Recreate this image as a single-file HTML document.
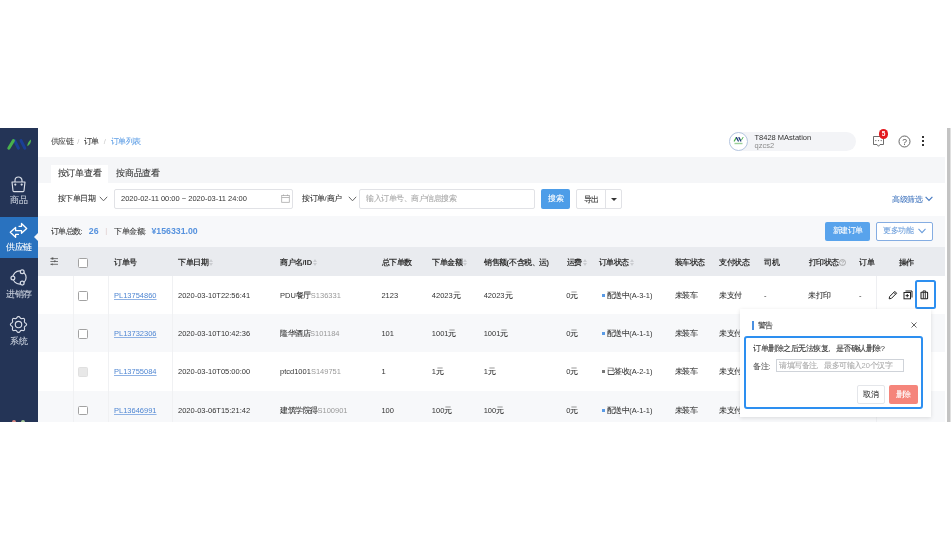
<!DOCTYPE html>
<html><head><meta charset="utf-8">
<style>
*{box-sizing:border-box;margin:0;padding:0}
html,body{width:951px;height:550px;background:#fff;overflow:hidden;font-family:"Liberation Sans",sans-serif;color:#333;font-size:7.5px}
.a{position:absolute;white-space:nowrap}
.c{letter-spacing:-0.5px;-webkit-text-stroke:0.08px currentColor}
.big .c{letter-spacing:-0.25px}
.th .c{-webkit-text-stroke:0}
#app{position:absolute;left:0;top:128px;width:951px;height:294px;overflow:hidden;background:#f0f2f5;will-change:transform}
#side{position:absolute;left:0;top:0;width:38px;height:294px;background:#243456}
.mi{position:absolute;left:0;width:38px;text-align:center;color:#c9d0dd;font-size:8.75px;line-height:10px}
#main{position:absolute;left:38px;top:0;width:909px;height:294px;background:#fff}
#tabbar{position:absolute;left:0;top:29px;width:907px;height:26px;background:#f5f6f8}
#hdr{position:absolute;left:0;top:0;width:909px;height:29px;background:#fff}
#scroll{position:absolute;left:947px;top:0;width:4px;height:294px;background:linear-gradient(90deg,#c3c3c3 0,#c3c3c3 3px,#e0e0e0 3px)}
.tab{position:absolute;top:37px;height:18px;line-height:16px;font-size:8.75px;color:#333;text-align:center}
#filter{position:absolute;left:0;top:55px;width:907px;height:32.5px;background:#fff}
#summary{position:absolute;left:0;top:87.5px;width:907px;height:31.5px;background:#f7f8fa}
#thead{position:absolute;left:0;top:119px;width:906.5px;height:29px;background:#e9ebef}
.row{position:absolute;left:0;width:907px;height:38.3px;background:#fff}
.row.s{background:#f7f8fa}
.th{position:absolute;top:1px;line-height:29px;font-weight:bold;color:#333}
.so{display:inline-block;vertical-align:top;margin-left:1.2px;margin-top:10.8px;width:4px;height:7px;position:relative}
.so:before,.so:after{content:'';position:absolute;left:0;border-left:2px solid transparent;border-right:2px solid transparent}
.so:before{top:0;border-bottom:3.3px solid #cbcdd1}
.so:after{bottom:0;border-top:3.3px solid #cbcdd1}
.td{position:absolute;line-height:38px;top:1px;color:#333}
.cb{position:absolute;width:9.5px;height:9.5px;border:1px solid #a2a2a2;border-radius:1.5px;background:#fff}
.lk{color:#4f86d2;text-decoration:underline;text-decoration-color:#8fb2e4;text-decoration-thickness:0.6px;text-underline-offset:1.2px}
.g{color:#999}
.inp{position:absolute;border:1px solid #e1e2e6;border-radius:2px;background:#fff}
.btn{position:absolute;border-radius:2px;text-align:center}
</style></head><body>
<div id="app">

  <div id="side">
    <svg class="a" style="left:0;top:0" width="38" height="29" viewBox="0 0 38 29">
      <line x1="14.6" y1="12.6" x2="18.4" y2="20.2" stroke="#1a3f96" stroke-width="3" stroke-linecap="round"/>
      <line x1="21" y1="12.6" x2="24.8" y2="20.2" stroke="#1a3f96" stroke-width="3" stroke-linecap="round"/>
      <line x1="8.8" y1="20.2" x2="13.4" y2="12.6" stroke="#48b04c" stroke-width="3" stroke-linecap="round"/>
      <path d="M27.3 18.2 C27.2 15.5 28.8 12.8 31 11.4 C31.3 14.2 29.8 16.9 27.3 18.2 Z" fill="#52b552"/>
    </svg>
    <svg class="a" style="left:10px;top:47.5px" width="17" height="17" viewBox="0 0 17 17">
      <path d="M2 6 H15 L14 14.8 Q13.9 15.6 13.1 15.6 H3.9 Q3.1 15.6 3 14.8 Z" fill="none" stroke="#d9dee8" stroke-width="1.15" stroke-linejoin="round"/>
      <path d="M5 6 V4.5 A3.5 3.5 0 0 1 12 4.5 V6" fill="none" stroke="#d9dee8" stroke-width="1.15"/>
      <circle cx="5.3" cy="8.6" r="1.1" fill="#d9dee8"/><circle cx="11.7" cy="8.6" r="1.1" fill="#d9dee8"/>
    </svg>
    <div class="mi big" style="top:66.5px"><span class="c">商品</span></div>
    <div class="a" style="left:0;top:88.5px;width:38px;height:41px;background:#2972bf"></div>
    <svg class="a" style="left:0;top:88px" width="38" height="30" viewBox="0 0 38 30">
      <path d="M19 10.3 H21.5 V7.5 L26.7 12.5 L21.5 17.3 V14.7 H15.6 V11.4 L10.3 16.2 L15.6 21.2 V18.4 H18.4" fill="none" stroke="#fff" stroke-width="1.3" stroke-linejoin="round" stroke-linecap="round"/>
    </svg>
    <div class="mi big" style="top:113.5px;color:#fff"><span class="c">供应链</span></div>
    <div class="a" style="left:34px;top:105px;width:0;height:0;border-top:4px solid transparent;border-bottom:4px solid transparent;border-right:4px solid #f7f8fa"></div>
    <svg class="a" style="left:9px;top:140px" width="20" height="20" viewBox="0 0 20 20">
      <circle cx="10.5" cy="9.5" r="6.6" fill="none" stroke="#d5dae5" stroke-width="1.2"/>
      <circle cx="13.2" cy="3.8" r="1.9" fill="#243456" stroke="#d5dae5" stroke-width="1.25"/>
      <circle cx="3.9" cy="9.9" r="1.9" fill="#243456" stroke="#d5dae5" stroke-width="1.25"/>
      <circle cx="13.2" cy="15.1" r="1.9" fill="#243456" stroke="#d5dae5" stroke-width="1.25"/>
    </svg>
    <div class="mi big" style="top:160.5px"><span class="c">进销存</span></div>
    <svg class="a" style="left:9px;top:186.8px" width="19" height="19" viewBox="0 0 19 19">
      <path d="M9.50 1.45 L10.02 1.57 L10.50 1.92 L10.91 2.39 L11.27 2.88 L11.61 3.29 L11.97 3.54 L12.40 3.62 L12.92 3.57 L13.53 3.47 L14.16 3.43 L14.74 3.53 L15.19 3.81 L15.47 4.26 L15.57 4.84 L15.53 5.47 L15.43 6.07 L15.38 6.60 L15.46 7.03 L15.71 7.39 L16.12 7.73 L16.61 8.09 L17.08 8.50 L17.43 8.98 L17.55 9.50 L17.43 10.02 L17.08 10.50 L16.61 10.91 L16.12 11.27 L15.71 11.61 L15.46 11.97 L15.38 12.40 L15.43 12.92 L15.53 13.53 L15.57 14.16 L15.47 14.74 L15.19 15.19 L14.74 15.47 L14.16 15.57 L13.53 15.53 L12.92 15.43 L12.40 15.38 L11.97 15.46 L11.61 15.71 L11.27 16.12 L10.91 16.61 L10.50 17.08 L10.02 17.43 L9.50 17.55 L8.98 17.43 L8.50 17.08 L8.09 16.61 L7.73 16.12 L7.39 15.71 L7.03 15.46 L6.60 15.38 L6.08 15.43 L5.47 15.53 L4.84 15.57 L4.26 15.47 L3.81 15.19 L3.53 14.74 L3.43 14.16 L3.47 13.53 L3.57 12.93 L3.62 12.40 L3.54 11.97 L3.29 11.61 L2.88 11.27 L2.39 10.91 L1.92 10.50 L1.57 10.02 L1.45 9.50 L1.57 8.98 L1.92 8.50 L2.39 8.09 L2.88 7.73 L3.29 7.39 L3.54 7.03 L3.62 6.60 L3.57 6.07 L3.47 5.47 L3.43 4.84 L3.53 4.26 L3.81 3.81 L4.26 3.53 L4.84 3.43 L5.47 3.47 L6.07 3.57 L6.60 3.62 L7.03 3.54 L7.39 3.29 L7.73 2.88 L8.09 2.39 L8.50 1.92 L8.98 1.57 Z" fill="none" stroke="#d5dae5" stroke-width="1.15" stroke-linejoin="round"/>
      <circle cx="9.5" cy="9.5" r="3.2" fill="none" stroke="#d5dae5" stroke-width="1.15"/>
    </svg>
    <div class="mi big" style="top:207.5px"><span class="c">系统</span></div>
    <div class="a" style="left:12px;top:292px;width:4px;height:4px;border-radius:2px;background:#d98a84"></div>
    <div class="a" style="left:21px;top:292px;width:4px;height:4px;border-radius:2px;background:#a7c99a"></div>
  </div>

  <div id="main">

    <div id="hdr">
      <div class="a" style="left:12.5px;top:9px;line-height:10px;color:#484848"><span class="c">供应链</span><span style="color:#c8c8c8;margin:0 4.3px">/</span><span style="color:#333"><span class="c">订单</span></span><span style="color:#c8c8c8;margin:0 5px">/</span><span style="color:#5e9ee6"><span class="c">订单列表</span></span></div>
      <div class="a" style="left:691px;top:4px;width:127px;height:18.5px;border-radius:9.5px;background:#f3f4f7"></div>
      <div class="a" style="left:691px;top:4px;width:19px;height:19px;border-radius:50%;background:#fff;border:0.8px solid #b5c6e0"></div>
      <svg class="a" style="left:691px;top:4px" width="19" height="19" viewBox="0 0 19 19">
        <line x1="5.3" y1="9" x2="7.3" y2="5.6" stroke="#4cae4f" stroke-width="1.3" stroke-linecap="round"/>
        <line x1="7.5" y1="5.6" x2="9.3" y2="9" stroke="#203a7a" stroke-width="1.3" stroke-linecap="round"/>
        <line x1="10" y1="5.6" x2="11.8" y2="9" stroke="#203a7a" stroke-width="1.3" stroke-linecap="round"/>
        <line x1="12.6" y1="7.8" x2="14" y2="5.4" stroke="#4cae4f" stroke-width="1" stroke-linecap="round"/>
        <rect x="5.5" y="10.8" width="8" height="1.4" fill="#9cd09a"/>
      </svg>
      <div class="a" style="left:716.5px;top:5px;line-height:9px;color:#333">T8428 MAstation</div>
      <div class="a" style="left:716.5px;top:13px;line-height:9px;color:#8c8c8c">qzcs2</div>
      <svg class="a" style="left:834px;top:7px" width="13" height="13" viewBox="0 0 13 13">
        <path d="M1.5 1.5 H11.5 V9.5 H8 L6.5 11.3 L5 9.5 H1.5 Z" fill="#fff" stroke="#666" stroke-width="0.95" stroke-linejoin="round"/>
        <circle cx="3.8" cy="5.6" r="0.65" fill="#666"/><circle cx="6.5" cy="5.6" r="0.65" fill="#666"/><circle cx="9.2" cy="5.6" r="0.65" fill="#666"/>
      </svg>
      <div class="a" style="left:840.8px;top:1.3px;width:9.4px;height:9.4px;border-radius:50%;background:#e3191e;color:#fff;font-size:6.5px;line-height:9.4px;text-align:center;font-weight:bold">5</div>
      <svg class="a" style="left:860px;top:7px" width="13" height="13" viewBox="0 0 13 13">
        <circle cx="6.5" cy="6.5" r="5.5" fill="none" stroke="#555" stroke-width="0.9"/>
        <text x="6.5" y="9.6" font-size="8.5" text-anchor="middle" fill="#555" font-family="Liberation Sans">?</text>
      </svg>
      <div class="a" style="left:884px;top:8px;width:2px;height:2px;background:#333"></div>
      <div class="a" style="left:884px;top:12px;width:2px;height:2px;background:#333"></div>
      <div class="a" style="left:884px;top:16px;width:2px;height:2px;background:#333"></div>
    </div>

    <div id="tabbar"></div>
    <div class="tab big" style="left:13px;width:57px;background:#fff"><span class="c">按订单查看</span></div>
    <div class="tab big" style="left:72px;width:56px"><span class="c">按商品查看</span></div>

    <div id="filter">
      <div class="a" style="left:19.5px;top:10.5px;line-height:10px;color:#333"><span class="c">按下单日期</span></div>
      <svg class="a" style="left:61px;top:12.7px" width="9" height="6" viewBox="0 0 9 6"><polyline points="0.8,0.8 4.5,4.8 8.2,0.8" fill="none" stroke="#666" stroke-width="1"/></svg>
      <div class="inp" style="left:76px;top:6px;width:178.5px;height:19.5px"></div>
      <div class="a" style="left:83px;top:10.5px;line-height:10px;color:#333">2020-02-11 00:00 ~ 2020-03-11 24:00</div>
      <svg class="a" style="left:243px;top:11px" width="9" height="9" viewBox="0 0 9 9"><rect x="0.7" y="1.5" width="7.6" height="6.8" fill="none" stroke="#aaa" stroke-width="0.8"/><line x1="0.7" y1="3.5" x2="8.3" y2="3.5" stroke="#aaa" stroke-width="0.8"/><line x1="2.5" y1="0.5" x2="2.5" y2="2" stroke="#aaa" stroke-width="0.8"/><line x1="6.5" y1="0.5" x2="6.5" y2="2" stroke="#aaa" stroke-width="0.8"/></svg>
      <div class="a" style="left:264px;top:10.5px;line-height:10px;color:#333"><span class="c">按订单</span>/<span class="c">商户</span></div>
      <svg class="a" style="left:309.5px;top:12.7px" width="9" height="6" viewBox="0 0 9 6"><polyline points="0.8,0.8 4.5,4.8 8.2,0.8" fill="none" stroke="#666" stroke-width="1"/></svg>
      <div class="inp" style="left:321px;top:6px;width:175.5px;height:19.5px"></div>
      <div class="a" style="left:328px;top:10.5px;line-height:10px;color:#aaa"><span class="c">输入订单号、商户信息搜索</span></div>
      <div class="btn" style="left:503px;top:6px;width:29px;height:19.5px;background:#4d9de8;color:#fff;line-height:19.5px"><span class="c">搜索</span></div>
      <div class="btn" style="left:538px;top:6px;width:45.5px;height:19.5px;border:1px solid #e1e2e6;background:#fff"></div>
      <div class="a" style="left:538.5px;top:6.5px;width:29px;line-height:19px;text-align:center;color:#333"><span class="c">导出</span></div>
      <div class="a" style="left:567px;top:7px;width:1px;height:17.5px;background:#e1e2e6"></div>
      <div class="a" style="left:573px;top:14.5px;width:0;height:0;border-left:3px solid transparent;border-right:3px solid transparent;border-top:3.5px solid #333"></div>
      <div class="a" style="left:854px;top:12px;line-height:10px;color:#4679c0"><span class="c">高级筛选</span></div>
      <svg class="a" style="left:886.5px;top:13px" width="8" height="6" viewBox="0 0 8 6"><polyline points="0.6,0.8 4,4.4 7.4,0.8" fill="none" stroke="#4679c0" stroke-width="1.15"/></svg>
    </div>

    <div id="summary">
      <div class="a" style="left:12.5px;top:11px;line-height:10px;color:#333"><span class="c">订单总数</span>:</div>
      <div class="a" style="left:50.8px;top:10.3px;line-height:11px;font-size:8.75px;color:#5692de;font-weight:bold">26</div>
      <div class="a" style="left:67.3px;top:10.5px;line-height:10px;color:#dcc8c8">|</div>
      <div class="a" style="left:76px;top:11px;line-height:10px;color:#333"><span class="c">下单金额</span>:</div>
      <div class="a" style="left:113.5px;top:10.3px;line-height:11px;font-size:8.75px;color:#5692de;font-weight:bold">¥156331.00</div>
      <div class="btn" style="left:787px;top:6.5px;width:45px;height:18.5px;background:#58a3ec;color:#fff;line-height:18.5px"><span class="c">新建订单</span></div>
      <div class="btn" style="left:838px;top:6.5px;width:56.5px;height:18.5px;border:1px solid #85ade2;background:#fff;color:#6a9ddb;line-height:16.5px;text-align:left;padding-left:6px"><span class="c">更多功能</span></div>
      <svg class="a" style="left:879.5px;top:12.5px" width="8" height="6" viewBox="0 0 8 6"><polyline points="0.5,0.8 4,4.6 7.5,0.8" fill="none" stroke="#6a9ddb" stroke-width="1.1"/></svg>
    </div>

    <div id="thead">
      <svg class="a" style="left:12px;top:10px" width="9" height="9" viewBox="0 0 9 9"><path d="M0.4 1.6 H8 M0.4 4.5 H8 M0.4 7.3 H8" stroke="#555" stroke-width="0.8"/><path d="M1.6 0.6 L3.4 0.6 L3.4 2.6 L1.6 2.6 Z M3.8 3.5 L5.8 3.5 L4.8 5.5 Z M0.8 7.3 L2.6 6.2 L2.6 8.4 Z" fill="#555"/></svg>
      <div class="cb" style="left:40.2px;top:11.3px"></div>
      <div class="th" style="left:76px"><span class="c">订单号</span></div>
      <div class="th" style="left:140px"><span class="c">下单日期</span><i class="so"></i></div>
      <div class="th" style="left:242px"><span class="c">商户名</span>/ID<i class="so"></i></div>
      <div class="th" style="left:343.5px"><span class="c">总下单数</span></div>
      <div class="th" style="left:394px"><span class="c">下单金额</span><i class="so"></i></div>
      <div class="th" style="left:446px"><span class="c">销售额</span>(<span class="c">不含税、运</span>)</div>
      <div class="th" style="left:528.5px"><span class="c">运费</span><i class="so"></i></div>
      <div class="th" style="left:560.5px"><span class="c">订单状态</span><i class="so"></i></div>
      <div class="th" style="left:636.5px"><span class="c">装车状态</span></div>
      <div class="th" style="left:681px"><span class="c">支付状态</span></div>
      <div class="th" style="left:726px"><span class="c">司机</span></div>
      <div class="th" style="left:770.5px"><span class="c">打印状态</span><svg style="display:inline-block;vertical-align:top;margin-top:10.5px;margin-left:0.5px" width="7" height="7" viewBox="0 0 7 7"><circle cx="3.5" cy="3.5" r="3" fill="none" stroke="#999" stroke-width="0.75"/><path d="M2.5 2.6 C2.5 1.5 4.6 1.5 4.6 2.6 C4.6 3.3 3.5 3.4 3.5 4.3" fill="none" stroke="#999" stroke-width="0.7"/><circle cx="3.5" cy="5.35" r="0.4" fill="#999"/></svg></div>
      <div class="th" style="left:860.5px"><span class="c">操作</span></div>
      <div class="th" style="left:821px;width:17px;overflow:hidden"><span class="c">订单状态</span></div>
    </div>
<div class="row" style="top:148px">
<div class="a" style="left:35px;top:0;width:1px;height:38.3px;background:#f0f1f3"></div>
<div class="a" style="left:70.4px;top:0;width:1px;height:38.3px;background:#f0f1f3"></div>
<div class="a" style="left:134.2px;top:0;width:1px;height:38.3px;background:#f0f1f3"></div>
<div class="cb" style="left:40.2px;top:15px"></div>
<div class="td lk" style="left:76px">PL13754860</div>
<div class="td" style="left:140px">2020-03-10T22:56:41</div>
<div class="td" style="left:242px">PDU<span class="c">餐厅</span><span class="g">S136331</span></div>
<div class="td" style="left:343.4px">2123</div>
<div class="td" style="left:393.8px">42023<span class="c">元</span></div>
<div class="td" style="left:445.7px">42023<span class="c">元</span></div>
<div class="td" style="left:528.3px">0<span class="c">元</span></div>
<div class="a" style="left:564px;top:18px;width:3px;height:3px;background:#5a9be6"></div>
<div class="td" style="left:568.7px"><span class="c">配送中</span>(A-3-1)</div>
<div class="td" style="left:636.5px"><span class="c">未装车</span></div>
<div class="td" style="left:681px"><span class="c">未支付</span></div>
<div class="td" style="left:725.9px">-</div>
<div class="td" style="left:770.2px"><span class="c">未打印</span></div>
<div class="td" style="left:821.1px">-</div>
<div class="a" style="left:838px;top:0;width:69px;height:38.3px;background:inherit;border-left:1px solid #eeeff2"></div>
</div>
<div class="row s" style="top:186.2px">
<div class="a" style="left:35px;top:0;width:1px;height:38.3px;background:#f0f1f3"></div>
<div class="a" style="left:70.4px;top:0;width:1px;height:38.3px;background:#f0f1f3"></div>
<div class="a" style="left:134.2px;top:0;width:1px;height:38.3px;background:#f0f1f3"></div>
<div class="cb" style="left:40.2px;top:15px"></div>
<div class="td lk" style="left:76px">PL13732306</div>
<div class="td" style="left:140px">2020-03-10T10:42:36</div>
<div class="td" style="left:242px"><span class="c">隆华酒店</span><span class="g">S101184</span></div>
<div class="td" style="left:343.4px">101</div>
<div class="td" style="left:393.8px">1001<span class="c">元</span></div>
<div class="td" style="left:445.7px">1001<span class="c">元</span></div>
<div class="td" style="left:528.3px">0<span class="c">元</span></div>
<div class="a" style="left:564px;top:18px;width:3px;height:3px;background:#5a9be6"></div>
<div class="td" style="left:568.7px"><span class="c">配送中</span>(A-1-1)</div>
<div class="td" style="left:636.5px"><span class="c">未装车</span></div>
<div class="td" style="left:681px"><span class="c">未支付</span></div>
<div class="a" style="left:838px;top:0;width:69px;height:38.3px;background:inherit;border-left:1px solid #eeeff2"></div>
</div>
<div class="row" style="top:224.4px">
<div class="a" style="left:35px;top:0;width:1px;height:38.3px;background:#f0f1f3"></div>
<div class="a" style="left:70.4px;top:0;width:1px;height:38.3px;background:#f0f1f3"></div>
<div class="a" style="left:134.2px;top:0;width:1px;height:38.3px;background:#f0f1f3"></div>
<div class="cb" style="left:40.2px;top:15px;background:#e8e8e8;border-color:#e0e0e0"></div>
<div class="td lk" style="left:76px">PL13755084</div>
<div class="td" style="left:140px">2020-03-10T05:00:00</div>
<div class="td" style="left:242px">ptcd1001<span class="g">S149751</span></div>
<div class="td" style="left:343.4px">1</div>
<div class="td" style="left:393.8px">1<span class="c">元</span></div>
<div class="td" style="left:445.7px">1<span class="c">元</span></div>
<div class="td" style="left:528.3px">0<span class="c">元</span></div>
<div class="a" style="left:564px;top:18px;width:3px;height:3px;background:#777"></div>
<div class="td" style="left:568.7px"><span class="c">已签收</span>(A-2-1)</div>
<div class="td" style="left:636.5px"><span class="c">未装车</span></div>
<div class="td" style="left:681px"><span class="c">未支付</span></div>
<div class="a" style="left:838px;top:0;width:69px;height:38.3px;background:inherit;border-left:1px solid #eeeff2"></div>
</div>
<div class="row s" style="top:262.6px">
<div class="a" style="left:35px;top:0;width:1px;height:38.3px;background:#f0f1f3"></div>
<div class="a" style="left:70.4px;top:0;width:1px;height:38.3px;background:#f0f1f3"></div>
<div class="a" style="left:134.2px;top:0;width:1px;height:38.3px;background:#f0f1f3"></div>
<div class="cb" style="left:40.2px;top:15px"></div>
<div class="td lk" style="left:76px">PL13646991</div>
<div class="td" style="left:140px">2020-03-06T15:21:42</div>
<div class="td" style="left:242px"><span class="c">建筑学院得</span><span class="g">S100901</span></div>
<div class="td" style="left:343.4px">100</div>
<div class="td" style="left:393.8px">100<span class="c">元</span></div>
<div class="td" style="left:445.7px">100<span class="c">元</span></div>
<div class="td" style="left:528.3px">0<span class="c">元</span></div>
<div class="a" style="left:564px;top:18px;width:3px;height:3px;background:#5a9be6"></div>
<div class="td" style="left:568.7px"><span class="c">配送中</span>(A-1-1)</div>
<div class="td" style="left:636.5px"><span class="c">未装车</span></div>
<div class="td" style="left:681px"><span class="c">未支付</span></div>
<div class="a" style="left:838px;top:0;width:69px;height:38.3px;background:inherit;border-left:1px solid #eeeff2"></div>
</div>

  </div>
  <div id="scroll"></div>

  <svg class="a" style="left:888px;top:162px" width="10" height="10" viewBox="0 0 10 10">
    <path d="M1.2 8.8 L1.6 6.6 L6.8 1.4 L8.6 3.2 L3.4 8.4 Z" fill="none" stroke="#222" stroke-width="1" stroke-linejoin="round"/>
    <line x1="5.8" y1="2.4" x2="7.6" y2="4.2" stroke="#222" stroke-width="1"/>
  </svg>
  <svg class="a" style="left:903px;top:162px" width="10" height="10" viewBox="0 0 10 10">
    <path d="M2.5 1 H9 V7.5" fill="none" stroke="#222" stroke-width="1"/>
    <rect x="1" y="2.5" width="6.5" height="6.3" fill="#fff" stroke="#222" stroke-width="1"/>
    <line x1="4.25" y1="4" x2="4.25" y2="7.3" stroke="#222" stroke-width="1"/>
    <line x1="2.6" y1="5.65" x2="5.9" y2="5.65" stroke="#222" stroke-width="1"/>
  </svg>
  <svg class="a" style="left:919.5px;top:162px" width="9" height="10" viewBox="0 0 9 10">
    <path d="M3 2 V0.9 H5.6 V2" fill="none" stroke="#222" stroke-width="0.9"/>
    <rect x="1" y="2.2" width="6.6" height="6.6" rx="0.5" fill="none" stroke="#222" stroke-width="1.05"/>
    <line x1="3.3" y1="2.2" x2="3.3" y2="8.6" stroke="#222" stroke-width="0.9"/>
    <line x1="5.3" y1="2.2" x2="5.3" y2="8.6" stroke="#222" stroke-width="0.9"/>
  </svg>
  <div class="a" style="left:915px;top:151.5px;width:20.5px;height:29px;border:2px solid #2d8ff0;border-radius:2.5px"></div>
  <div class="a" style="left:740px;top:181.3px;width:190.5px;height:108px;background:#fff;box-shadow:0 1px 4px rgba(0,0,0,0.12)">
    <div class="a" style="left:12px;top:12px;width:2px;height:9px;background:#4a90e2"></div>
    <div class="a" style="left:17.5px;top:12px;line-height:10px;color:#333"><span class="c">警告</span></div>
    <svg class="a" style="left:171.2px;top:13px" width="6" height="6" viewBox="0 0 6 6"><path d="M0.5 0.5 L5.5 5.5 M5.5 0.5 L0.5 5.5" stroke="#555" stroke-width="0.9"/></svg>
    <div class="a" style="left:3.5px;top:26.7px;width:179.5px;height:73.2px;border:2px solid #2d8ff0;border-radius:3px"></div>
    <div class="a" style="left:13.3px;top:34.5px;line-height:10px;color:#333"><span class="c">订单删除之后无法恢复</span><span style="display:inline-block;width:7.5px;letter-spacing:0">,</span><span class="c">是否确认删除</span>?</div>
    <div class="a" style="left:13.3px;top:52.5px;line-height:10px;color:#555"><span class="c">备注</span>:</div>
    <div class="a" style="left:36px;top:50px;width:128px;height:13.2px;border:1px solid #cfd3d9;background:#fff"></div>
    <div class="a" style="left:39px;top:51.5px;line-height:10px;color:#aaa"><span class="c">请填写备注</span><span style="display:inline-block;width:7.5px;letter-spacing:0">,</span><span class="c">最多可输入</span>20<span class="c">个汉字</span></div>
    <div class="btn" style="left:116.7px;top:76.2px;width:28.5px;height:18.6px;border:1px solid #e4e6ea;background:#fff;line-height:18.2px;color:#333"><span class="c">取消</span></div>
    <div class="btn" style="left:149.2px;top:76.2px;width:28.6px;height:18.6px;background:#f5857b;line-height:20.2px;color:#fff"><span class="c">删除</span></div>
  </div>

</div>
</body></html>
